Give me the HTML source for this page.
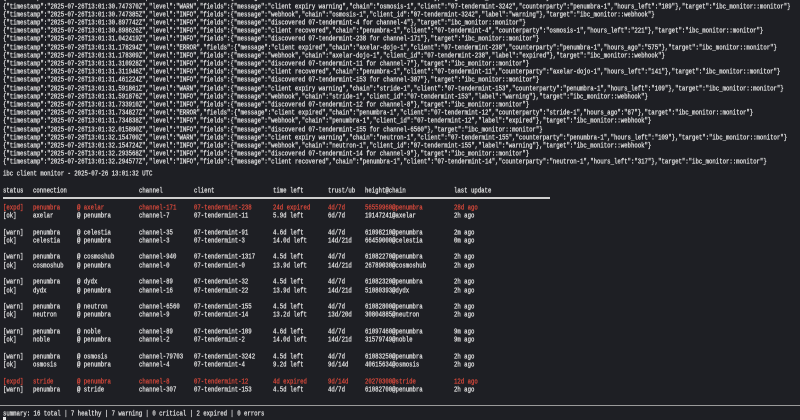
<!DOCTYPE html>
<html><head><meta charset="utf-8"><style>
html,body{margin:0;padding:0;background:#1e1f24;width:800px;height:420px;overflow:hidden}
body{position:relative;font-family:"Liberation Mono",monospace;font-size:5.67px;color:#e4e4e4;-webkit-text-stroke:0.2px currentColor}
.l{position:absolute;left:3px;white-space:pre;line-height:8px;transform:scaleY(1.25);transform-origin:0 50%}
.r{position:absolute;left:0;white-space:pre;line-height:8px;width:800px;transform:scaleY(1.25);transform-origin:0 50%}
.r span{position:absolute}
.red{color:#dc4a3c}
.c0{left:3px}.c1{left:33px}.c2{left:77px}.c3{left:139px}.c4{left:194px}.c5{left:273px}.c6{left:328px}.c7{left:365px}.c8{left:454px}
</style></head><body>
<div class="l" style="top:-5.7px">{"timestamp":"2025-07-26T13:01:30.614826Z","level":"INFO","fields":{"message":"discovered 07-tendermint-3242 for channel-79703"},"target":"ibc_monitor::monitor"}</div>
<div class="l" style="top:2.5px">{"timestamp":"2025-07-26T13:01:30.747370Z","level":"WARN","fields":{"message":"client expiry warning","chain":"osmosis-1","client":"07-tendermint-3242","counterparty":"penumbra-1","hours_left":"109"},"target":"ibc_monitor::monitor"}</div>
<div class="l" style="top:10.7px">{"timestamp":"2025-07-26T13:01:30.747385Z","level":"INFO","fields":{"message":"webhook","chain":"osmosis-1","client_id":"07-tendermint-3242","label":"warning"},"target":"ibc_monitor::webhook"}</div>
<div class="l" style="top:18.9px">{"timestamp":"2025-07-26T13:01:30.897742Z","level":"INFO","fields":{"message":"discovered 07-tendermint-4 for channel-4"},"target":"ibc_monitor::monitor"}</div>
<div class="l" style="top:27.1px">{"timestamp":"2025-07-26T13:01:30.898626Z","level":"INFO","fields":{"message":"client recovered","chain":"penumbra-1","client":"07-tendermint-4","counterparty":"osmosis-1","hours_left":"221"},"target":"ibc_monitor::monitor"}</div>
<div class="l" style="top:35.3px">{"timestamp":"2025-07-26T13:01:31.042419Z","level":"INFO","fields":{"message":"discovered 07-tendermint-238 for channel-171"},"target":"ibc_monitor::monitor"}</div>
<div class="l" style="top:43.5px">{"timestamp":"2025-07-26T13:01:31.178294Z","level":"ERROR","fields":{"message":"client expired","chain":"axelar-dojo-1","client":"07-tendermint-238","counterparty":"penumbra-1","hours_ago":"575"},"target":"ibc_monitor::monitor"}</div>
<div class="l" style="top:51.7px">{"timestamp":"2025-07-26T13:01:31.178309Z","level":"INFO","fields":{"message":"webhook","chain":"axelar-dojo-1","client_id":"07-tendermint-238","label":"expired"},"target":"ibc_monitor::webhook"}</div>
<div class="l" style="top:59.9px">{"timestamp":"2025-07-26T13:01:31.310928Z","level":"INFO","fields":{"message":"discovered 07-tendermint-11 for channel-7"},"target":"ibc_monitor::monitor"}</div>
<div class="l" style="top:68.1px">{"timestamp":"2025-07-26T13:01:31.311946Z","level":"INFO","fields":{"message":"client recovered","chain":"penumbra-1","client":"07-tendermint-11","counterparty":"axelar-dojo-1","hours_left":"141"},"target":"ibc_monitor::monitor"}</div>
<div class="l" style="top:76.3px">{"timestamp":"2025-07-26T13:01:31.461224Z","level":"INFO","fields":{"message":"discovered 07-tendermint-153 for channel-307"},"target":"ibc_monitor::monitor"}</div>
<div class="l" style="top:84.5px">{"timestamp":"2025-07-26T13:01:31.591861Z","level":"WARN","fields":{"message":"client expiry warning","chain":"stride-1","client":"07-tendermint-153","counterparty":"penumbra-1","hours_left":"109"},"target":"ibc_monitor::monitor"}</div>
<div class="l" style="top:92.7px">{"timestamp":"2025-07-26T13:01:31.591876Z","level":"INFO","fields":{"message":"webhook","chain":"stride-1","client_id":"07-tendermint-153","label":"warning"},"target":"ibc_monitor::webhook"}</div>
<div class="l" style="top:100.9px">{"timestamp":"2025-07-26T13:01:31.733910Z","level":"INFO","fields":{"message":"discovered 07-tendermint-12 for channel-8"},"target":"ibc_monitor::monitor"}</div>
<div class="l" style="top:109.1px">{"timestamp":"2025-07-26T13:01:31.734827Z","level":"ERROR","fields":{"message":"client expired","chain":"penumbra-1","client":"07-tendermint-12","counterparty":"stride-1","hours_ago":"87"},"target":"ibc_monitor::monitor"}</div>
<div class="l" style="top:117.3px">{"timestamp":"2025-07-26T13:01:31.734838Z","level":"INFO","fields":{"message":"webhook","chain":"penumbra-1","client_id":"07-tendermint-12","label":"expired"},"target":"ibc_monitor::webhook"}</div>
<div class="l" style="top:125.5px">{"timestamp":"2025-07-26T13:01:32.015890Z","level":"INFO","fields":{"message":"discovered 07-tendermint-155 for channel-6560"},"target":"ibc_monitor::monitor"}</div>
<div class="l" style="top:133.7px">{"timestamp":"2025-07-26T13:01:32.154700Z","level":"WARN","fields":{"message":"client expiry warning","chain":"neutron-1","client":"07-tendermint-155","counterparty":"penumbra-1","hours_left":"109"},"target":"ibc_monitor::monitor"}</div>
<div class="l" style="top:141.9px">{"timestamp":"2025-07-26T13:01:32.154724Z","level":"INFO","fields":{"message":"webhook","chain":"neutron-1","client_id":"07-tendermint-155","label":"warning"},"target":"ibc_monitor::webhook"}</div>
<div class="l" style="top:150.1px">{"timestamp":"2025-07-26T13:01:32.293568Z","level":"INFO","fields":{"message":"discovered 07-tendermint-14 for channel-9"},"target":"ibc_monitor::monitor"}</div>
<div class="l" style="top:158.3px">{"timestamp":"2025-07-26T13:01:32.294577Z","level":"INFO","fields":{"message":"client recovered","chain":"penumbra-1","client":"07-tendermint-14","counterparty":"neutron-1","hours_left":"317"},"target":"ibc_monitor::monitor"}</div>
<div class="l" style="top:169.5px">ibc client monitor - 2025-07-26 13:01:32 UTC</div>

<div class="r" style="top:186px"><span class="c0">status</span><span class="c1">connection</span><span class="c3">channel</span><span class="c4">client</span><span class="c5">time left</span><span class="c6">trust/ub</span><span class="c7">height@chain</span><span class="c8">last update</span></div>
<div style="position:absolute;left:3px;top:196.5px;width:547px;height:2px;background:#cfcfcf"></div>

<div class="r red" style="top:203px"><span class="c0">[expd]</span><span class="c1">penumbra</span><span class="c2">@ axelar</span><span class="c3">channel-171</span><span class="c4">07-tendermint-238</span><span class="c5">24d expired</span><span class="c6">4d/7d</span><span class="c7">56559960@penumbra</span><span class="c8">28d ago</span></div>
<div class="r" style="top:211.3px"><span class="c0">[ok]</span><span class="c1">axelar</span><span class="c2">@ penumbra</span><span class="c3">channel-7</span><span class="c4">07-tendermint-11</span><span class="c5">5.9d left</span><span class="c6">6d/7d</span><span class="c7">19147241@axelar</span><span class="c8">2h ago</span></div>

<div class="r" style="top:227.5px"><span class="c0">[warn]</span><span class="c1">penumbra</span><span class="c2">@ celestia</span><span class="c3">channel-35</span><span class="c4">07-tendermint-91</span><span class="c5">4.6d left</span><span class="c6">4d/7d</span><span class="c7">61098210@penumbra</span><span class="c8">2m ago</span></div>
<div class="r" style="top:235.8px"><span class="c0">[ok]</span><span class="c1">celestia</span><span class="c2">@ penumbra</span><span class="c3">channel-3</span><span class="c4">07-tendermint-3</span><span class="c5">14.0d left</span><span class="c6">14d/21d</span><span class="c7">66459000@celestia</span><span class="c8">0m ago</span></div>

<div class="r" style="top:252.3px"><span class="c0">[warn]</span><span class="c1">penumbra</span><span class="c2">@ cosmoshub</span><span class="c3">channel-940</span><span class="c4">07-tendermint-1317</span><span class="c5">4.5d left</span><span class="c6">4d/7d</span><span class="c7">61082270@penumbra</span><span class="c8">2h ago</span></div>
<div class="r" style="top:260.6px"><span class="c0">[ok]</span><span class="c1">cosmoshub</span><span class="c2">@ penumbra</span><span class="c3">channel-0</span><span class="c4">07-tendermint-0</span><span class="c5">13.9d left</span><span class="c6">14d/21d</span><span class="c7">26789030@cosmoshub</span><span class="c8">2h ago</span></div>

<div class="r" style="top:277.2px"><span class="c0">[warn]</span><span class="c1">penumbra</span><span class="c2">@ dydx</span><span class="c3">channel-89</span><span class="c4">07-tendermint-32</span><span class="c5">4.5d left</span><span class="c6">4d/7d</span><span class="c7">61082320@penumbra</span><span class="c8">2h ago</span></div>
<div class="r" style="top:285.5px"><span class="c0">[ok]</span><span class="c1">dydx</span><span class="c2">@ penumbra</span><span class="c3">channel-16</span><span class="c4">07-tendermint-22</span><span class="c5">13.9d left</span><span class="c6">14d/21d</span><span class="c7">51080393@dydx</span><span class="c8">2h ago</span></div>

<div class="r" style="top:302.1px"><span class="c0">[warn]</span><span class="c1">penumbra</span><span class="c2">@ neutron</span><span class="c3">channel-6560</span><span class="c4">07-tendermint-155</span><span class="c5">4.5d left</span><span class="c6">4d/7d</span><span class="c7">61082800@penumbra</span><span class="c8">2h ago</span></div>
<div class="r" style="top:310.4px"><span class="c0">[ok]</span><span class="c1">neutron</span><span class="c2">@ penumbra</span><span class="c3">channel-9</span><span class="c4">07-tendermint-14</span><span class="c5">13.2d left</span><span class="c6">13d/20d</span><span class="c7">30804885@neutron</span><span class="c8">2h ago</span></div>

<div class="r" style="top:327px"><span class="c0">[warn]</span><span class="c1">penumbra</span><span class="c2">@ noble</span><span class="c3">channel-89</span><span class="c4">07-tendermint-109</span><span class="c5">4.6d left</span><span class="c6">4d/7d</span><span class="c7">61097460@penumbra</span><span class="c8">9m ago</span></div>
<div class="r" style="top:335.3px"><span class="c0">[ok]</span><span class="c1">noble</span><span class="c2">@ penumbra</span><span class="c3">channel-2</span><span class="c4">07-tendermint-2</span><span class="c5">14.0d left</span><span class="c6">14d/21d</span><span class="c7">31579749@noble</span><span class="c8">9m ago</span></div>

<div class="r" style="top:351.8px"><span class="c0">[warn]</span><span class="c1">penumbra</span><span class="c2">@ osmosis</span><span class="c3">channel-79703</span><span class="c4">07-tendermint-3242</span><span class="c5">4.5d left</span><span class="c6">4d/7d</span><span class="c7">61083250@penumbra</span><span class="c8">2h ago</span></div>
<div class="r" style="top:360.1px"><span class="c0">[ok]</span><span class="c1">osmosis</span><span class="c2">@ penumbra</span><span class="c3">channel-4</span><span class="c4">07-tendermint-4</span><span class="c5">9.2d left</span><span class="c6">9d/14d</span><span class="c7">40615634@osmosis</span><span class="c8">2h ago</span></div>

<div class="r red" style="top:376.7px"><span class="c0">[expd]</span><span class="c1">stride</span><span class="c2">@ penumbra</span><span class="c3">channel-8</span><span class="c4">07-tendermint-12</span><span class="c5">4d expired</span><span class="c6">9d/14d</span><span class="c7">20270300@stride</span><span class="c8">12d ago</span></div>
<div class="r" style="top:385px"><span class="c0">[warn]</span><span class="c1">penumbra</span><span class="c2">@ stride</span><span class="c3">channel-307</span><span class="c4">07-tendermint-153</span><span class="c5">4.5d left</span><span class="c6">4d/7d</span><span class="c7">61082700@penumbra</span><span class="c8">2h ago</span></div>

<div style="position:absolute;left:0;top:405px;width:800px;height:1px;background:#9a9a9a"></div>
<div class="l" style="top:410px">summary: 16 total | 7 healthy | 7 warning | 0 critical | 2 expired | 0 errors</div>
<div style="position:absolute;left:3px;top:417px;width:3px;height:3px;background:#e8e8e8"></div>
</body></html>
